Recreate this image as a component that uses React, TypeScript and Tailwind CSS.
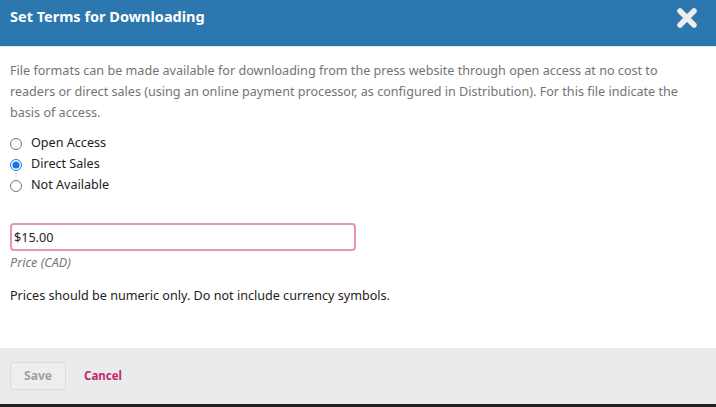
import React from 'react';

const options = [
  { id: 'open', label: 'Open Access' },
  { id: 'direct', label: 'Direct Sales' },
  { id: 'none', label: 'Not Available' },
];

export default function App() {
  const [access, setAccess] = React.useState('direct');
  const [price, setPrice] = React.useState('$15.00');

  return (
    <div className="w-[716px] h-[407px] flex flex-col bg-white overflow-hidden font-['Noto_Sans',sans-serif]">
      {/* Header */}
      <div className="h-[47px] shrink-0 bg-[#2c78ae] border-b border-[#d9e6f0] flex items-center justify-between pl-[10px] pr-[18px]">
        <h1 className="text-[14.5px] font-bold text-white -mt-[12px]">Set Terms for Downloading</h1>
        <button className="-mt-[10px]" aria-label="Close">
          <svg width="22" height="22" viewBox="0 0 22 22">
            <path d="M4 4 L18 18 M18 4 L4 18" stroke="#eeeeee" strokeWidth="5.5" strokeLinecap="round" />
          </svg>
        </button>
      </div>

      {/* Body */}
      <div className="flex-1 px-[10px] pt-[13px]">
        <p className="text-[12.6px] leading-[21px] text-[#747474]">
          File formats can be made available for downloading from the press website through open access at no cost to
          <br />
          readers or direct sales (using an online payment processor, as configured in Distribution). For this file indicate the
          <br />
          basis of access.
        </p>

        <div className="mt-[10px] flex flex-col">
          {options.map((o) => (
            <label key={o.id} className="flex items-center h-[21px] text-[12.6px] text-[#222] cursor-pointer">
              <input
                type="radio"
                name="access"
                checked={access === o.id}
                onChange={() => setAccess(o.id)}
                className="w-[12px] h-[12px] m-0 mr-[9px] accent-[#1a73e8]"
              />
              {o.label}
            </label>
          ))}
        </div>

        <div className="mt-[27px] w-[346px]">
          <input
            autoFocus
            value={price}
            onChange={(e) => setPrice(e.target.value)}
            className="w-full h-[28px] border-2 border-[#ea93b8] rounded-[4px] px-[2px] text-[12.6px] text-[#222] outline-none caret-[#222]"
          />
        </div>
        <div className="mt-[3px] text-[12.6px] italic text-[#777]">Price (CAD)</div>
        <p className="mt-[14px] text-[12.6px] text-[#222]">Prices should be numeric only. Do not include currency symbols.</p>
      </div>

      {/* Footer */}
      <div className="h-[56px] shrink-0 bg-[#eaebec] flex items-center pl-[10px] gap-[18px]">
        <button className="w-[56px] h-[28px] bg-[#eeeeee] border border-[#dadada] rounded-[3px] text-[12px] font-bold text-[#a0a0a0]">
          Save
        </button>
        <button className="text-[11.5px] font-bold text-[#c2286a]">Cancel</button>
      </div>
      <div className="h-[3px] shrink-0 bg-[#222]" />
    </div>
  );
}
